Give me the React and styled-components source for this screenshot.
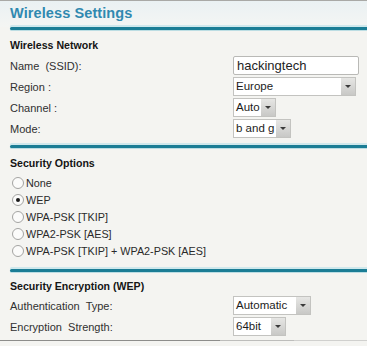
import React from 'react';
import styled, { createGlobalStyle } from 'styled-components';

const GlobalStyle = createGlobalStyle`
  html, body {
    margin: 0;
    padding: 0;
    background: #f4f4f1;
  }
  body {
    font-family: "Liberation Sans", Arial, sans-serif;
    color: #2a2a2a;
  }
`;

const Page = styled.div`
  width: 367px;
  height: 346px;
  overflow: hidden;
  background: #f4f4f1;
  border-top: 1px solid #a9a9a6;
  box-sizing: border-box;
`;

const Header = styled.div`
  height: 26px;
  padding-left: 10px;
  display: flex;
  align-items: center;
  padding-bottom: 2px;
  box-sizing: border-box;
  background: linear-gradient(#eaf1f3, #f4f5f3);
`;

const Title = styled.h1`
  margin: 0;
  font-size: 14.5px;
  font-weight: bold;
  color: #3089b0;
  letter-spacing: 0.1px;
`;

const Divider = styled.div`
  margin-left: 10px;
  height: 3px;
  background: #1b7d95;
  border-radius: 2px 0 0 2px;
  box-shadow: 0 -2px 0 #cfe8ec, 0 1px 0 #bcdde3;
`;

const Section = styled.section`
  padding: ${p => p.$pad || '8px 0 6px 10px'};
`;

const Heading = styled.h2`
  margin: 0 0 ${p => p.$gap || 4}px;
  font-size: 10.6px;
  font-weight: bold;
  color: #151515;
  height: 14px;
  line-height: 14px;
`;

const Row = styled.div`
  display: flex;
  align-items: center;
  height: 21px;
`;

const Label = styled.span`
  width: 223px;
  font-size: 11px;
  color: #303030;
  white-space: pre;
`;

const TextBox = styled.div`
  width: 121px;
  height: 17px;
  border: 1px solid #b9b9b6;
  border-radius: 2px;
  background: #fff;
  font-size: 13px;
  line-height: 17px;
  padding-left: 3px;
  color: #1e1e1e;
`;

const Select = styled.div`
  width: ${p => p.$w}px;
  height: 17px;
  border: 1px solid #c3c3c0;
  background: #fff;
  display: flex;
  align-items: stretch;
  box-sizing: content-box;
`;

const SelectText = styled.span`
  flex: 1;
  font-size: 11.5px;
  line-height: 17px;
  padding-left: 2px;
  color: #1c1c1c;
  white-space: nowrap;
  overflow: hidden;
`;

const Arrow = styled.span`
  width: 14px;
  background: linear-gradient(#e6e6e4, #c8c8c6);
  display: flex;
  align-items: center;
  justify-content: center;
  &::after {
    content: '';
    border-left: 3px solid transparent;
    border-right: 3px solid transparent;
    border-top: 3px solid #3a3a3a;
  }
`;

const RadioRow = styled.label`
  display: flex;
  align-items: center;
  height: ${p => p.$h || 17}px;
  font-size: 10.8px;
  color: #2a2a2a;
`;

const RadioDot = styled.span`
  width: 10px;
  height: 10px;
  margin: 0 2px 0 2px;
  border: 1px solid #a4a4a2;
  border-radius: 50%;
  background: #fbfbfa;
  display: flex;
  align-items: center;
  justify-content: center;
  &::after {
    content: '';
    width: 4px;
    height: 4px;
    border-radius: 50%;
    background: ${p => (p.$on ? '#1a1a1a' : 'transparent')};
  }
`;

const BottomLine = styled.div`
  margin-top: 3px;
  height: 1px;
  background: linear-gradient(90deg, #8d8d8b 0 60%, #bdbdbb 60% 80%, #d0d0ce 80%);
`;

const SelectBox = ({ w, value }) => (
  <Select $w={w}>
    <SelectText>{value}</SelectText>
    <Arrow />
  </Select>
);

const options = [
  { label: 'None', on: false },
  { label: 'WEP', on: true },
  { label: 'WPA-PSK [TKIP]', on: false },
  { label: 'WPA2-PSK [AES]', on: false },
  { label: 'WPA-PSK [TKIP] + WPA2-PSK [AES]', on: false },
];

export default function App() {
  return (
    <Page>
      <GlobalStyle />
      <Header>
        <Title>Wireless Settings</Title>
      </Header>
      <Divider />
      <Section $pad="8px 0 6px 10px">
        <Heading $gap={3}>Wireless Network</Heading>
        <Row>
          <Label>{'Name  (SSID):'}</Label>
          <TextBox>hackingtech</TextBox>
        </Row>
        <Row>
          <Label>Region :</Label>
          <SelectBox w={121} value="Europe" />
        </Row>
        <Row>
          <Label>Channel :</Label>
          <SelectBox w={41} value="Auto" />
        </Row>
        <Row>
          <Label>Mode:</Label>
          <SelectBox w={56} value="b and g" />
        </Row>
      </Section>
      <Divider />
      <Section $pad="8px 0 10px 10px">
        <Heading $gap={4}>Security Options</Heading>
        {options.map(o => (
          <RadioRow key={o.label}>
            <RadioDot $on={o.on} />
            {o.label}
          </RadioRow>
        ))}
      </Section>
      <Divider />
      <Section $pad="7px 0 0 10px">
        <Heading $gap={2}>Security Encryption (WEP)</Heading>
        <Row>
          <Label>{'Authentication  Type:'}</Label>
          <SelectBox w={76} value="Automatic" />
        </Row>
        <Row>
          <Label>{'Encryption  Strength:'}</Label>
          <SelectBox w={51} value="64bit" />
        </Row>
      </Section>
      <BottomLine />
    </Page>
  );
}
